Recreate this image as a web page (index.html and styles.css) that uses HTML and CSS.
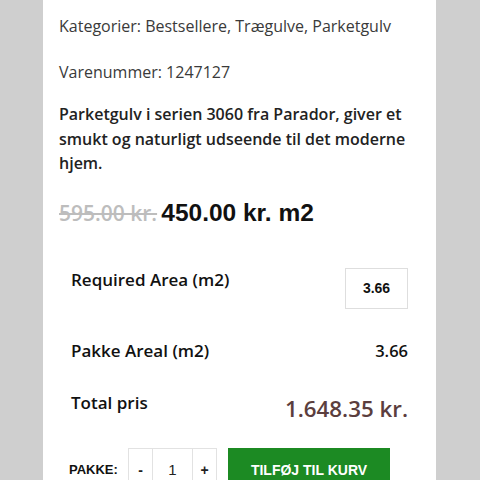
FILE: index.html
```html
<!DOCTYPE html>
<html lang="da">
<head>
    <meta charset="UTF-8">
    <meta name="viewport" content="width=device-width, initial-scale=1.0">
    <title>Parketgulv 3060</title>
    <link rel="stylesheet" href="styles.css">
</head>
<body>
    <div class="sheet">
        <p class="meta meta-first">Kategorier: Bestsellere, Trægulve, Parketgulv</p>
        <p class="meta">Varenummer: 1247127</p>

        <p class="desc">Parketgulv i serien 3060 fra Parador, giver et smukt og naturligt udseende til det moderne hjem.</p>

        <p class="price"><del class="old">595.00 kr.</del> <span class="now">450.00 kr. m2</span></p>

        <div class="calc">
            <div class="row row-area">
                <span class="label">Required Area (m2)</span>
                <input class="area" type="text" value="3.66">
            </div>
            <div class="row row-pack">
                <span class="label">Pakke Areal (m2)</span>
                <span class="value">3.66</span>
            </div>
            <div class="row row-total">
                <span class="label">Total pris</span>
                <span class="sum">1.648.35 kr.</span>
            </div>
        </div>

        <div class="cart">
            <span class="pakke">PAKKE:</span>
            <div class="qty">
                <button class="step" type="button">-</button>
                <input class="count" type="text" value="1">
                <button class="step" type="button">+</button>
            </div>
            <button class="addbtn" type="button">TILFØJ TIL KURV</button>
        </div>
    </div>
</body>
</html>
```

FILE: styles.css
```css
body {
    margin: 0;
    background: #cfcfcf;
    font-family: "Open Sans", "DejaVu Sans", sans-serif;
    overflow: hidden;
}

.sheet {
    margin-left: 43px;
    width: 393px;
    height: 480px;
    background: #fff;
    padding-top: 14px;
    box-sizing: border-box;
}

p {
    margin: 0;
}

.meta {
    margin-top: 22px;
    padding-left: 16px;
    font-size: 16px;
    line-height: 24px;
    color: #3a3a3a;
}

.meta-first {
    margin-top: 0;
}

.desc {
    margin-top: 18px;
    padding-left: 16px;
    padding-right: 30px;
    font-size: 16px;
    font-weight: 600;
    line-height: 24.5px;
    color: #222;
}

.price {
    margin-top: 22px;
    padding-left: 16px;
    line-height: 30px;
}

.old {
    font-size: 21px;
    font-weight: 600;
    color: #bdbdbd;
}

.now {
    font-family: "Liberation Sans", Arial, sans-serif;
    font-size: 24.5px;
    font-weight: bold;
    color: #111;
}

.calc {
    margin-top: 38px;
    padding: 0 28px;
}

.row {
    display: flex;
    justify-content: space-between;
    align-items: flex-start;
}

.label {
    font-size: 17px;
    font-weight: 600;
    line-height: 24px;
    color: #111;
}

.area {
    width: 63px;
    height: 41px;
    box-sizing: border-box;
    border: 1px solid #dedede;
    text-align: center;
    font-family: "Liberation Sans", Arial, sans-serif;
    font-size: 14px;
    font-weight: bold;
    color: #111;
    outline: none;
}

.row-pack {
    margin-top: 30px;
}

.value {
    font-size: 16.5px;
    font-weight: 600;
    line-height: 24px;
    color: #111;
}

.row-total {
    margin-top: 28px;
}

.sum {
    padding-top: 3px;
    font-size: 22.3px;
    font-weight: 600;
    line-height: 30px;
    color: #5b3e3e;
}

.cart {
    margin-top: 24px;
    padding-left: 26px;
    display: flex;
    align-items: center;
}

.pakke {
    width: 48px;
    font-family: "Liberation Sans", Arial, sans-serif;
    font-size: 13px;
    font-weight: bold;
    color: #111;
}

.qty {
    margin-left: 11px;
    display: flex;
    height: 42px;
    border: 1px solid #e2e2e2;
}

.step {
    width: 23px;
    border: none;
    background: #fff;
    font-family: "Liberation Sans", Arial, sans-serif;
    font-size: 14px;
    font-weight: bold;
    color: #222;
    padding: 0;
}

.count {
    width: 41px;
    box-sizing: border-box;
    border: none;
    border-left: 1px solid #e2e2e2;
    border-right: 1px solid #e2e2e2;
    text-align: center;
    font-family: "Liberation Sans", Arial, sans-serif;
    font-size: 15px;
    color: #222;
    outline: none;
}

.addbtn {
    margin-left: 11px;
    width: 162px;
    height: 44px;
    border: none;
    background: #1c8a23;
    color: #fff;
    font-family: "Liberation Sans", Arial, sans-serif;
    font-size: 14px;
    font-weight: bold;
}
```
